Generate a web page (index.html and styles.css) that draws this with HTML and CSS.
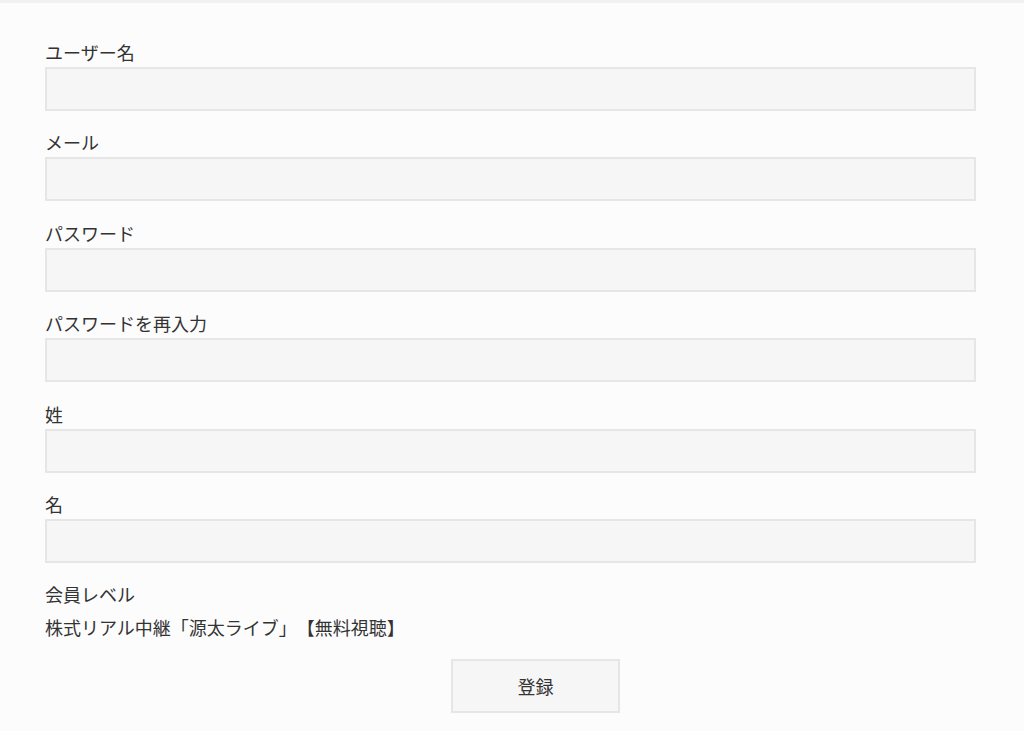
FILE: index.html
```html
<!DOCTYPE html>
<html lang="ja">
  <head>
    <meta charset="UTF-8" />
    <meta name="viewport" content="width=device-width, initial-scale=1.0" />
    <title>会員登録</title>
    <link rel="stylesheet" href="styles.css">
  </head>
  <body>
    <div class="page">
      <!-- 登録フォーム -->
      <form class="register-form">
        <div class="field">
          <label for="user_login">ユーザー名</label>
          <input type="text" id="user_login" />
        </div>
        <div class="field">
          <label for="user_email">メール</label>
          <input type="email" id="user_email" />
        </div>
        <div class="field">
          <label for="user_pass">パスワード</label>
          <input type="password" id="user_pass" />
        </div>
        <div class="field">
          <label for="user_pass2">パスワードを再入力</label>
          <input type="password" id="user_pass2" />
        </div>
        <div class="field">
          <label for="last_name">姓</label>
          <input type="text" id="last_name" />
        </div>
        <div class="field">
          <label for="first_name">名</label>
          <input type="text" id="first_name" />
        </div>

        <!-- 会員レベル -->
        <div class="level">
          <p class="level-title">会員レベル</p>
          <p class="level-name">株式リアル中継「源太ライブ」【無料視聴】</p>
        </div>

        <div class="submit-row">
          <button type="submit" class="submit-button">登録</button>
        </div>
      </form>
    </div>
  </body>
</html>
```

FILE: styles.css
```css
body {
  margin: 0;
  background-color: #fcfcfc;
  color: #333;
  font-family: "Noto Sans CJK JP", "Noto Sans", sans-serif;
  font-size: 18px;
  text-spacing-trim: space-all;
}

.page {
  border-top: 3px solid #f1f1f1;
  padding: 37px 48px 0 45px;
}

.field {
  margin-bottom: 19.4px;
}

.field label {
  display: block;
  line-height: 24px;
  margin-bottom: 3px;
}

.field input {
  display: block;
  box-sizing: border-box;
  width: 100%;
  height: 44px;
  margin: 0;
  border: 2px solid #e6e6e6;
  background-color: #f6f6f6;
  font: inherit;
}

.level p {
  margin: 0;
  line-height: 24px;
}

.level-title {
  margin-bottom: 9px !important;
}

.submit-row {
  padding-left: 406px;
  margin-top: 20px;
}

.submit-button {
  box-sizing: border-box;
  width: 169px;
  height: 54px;
  border: 2px solid #e6e6e6;
  background-color: #f6f6f6;
  color: #333;
  font: inherit;
}
```
